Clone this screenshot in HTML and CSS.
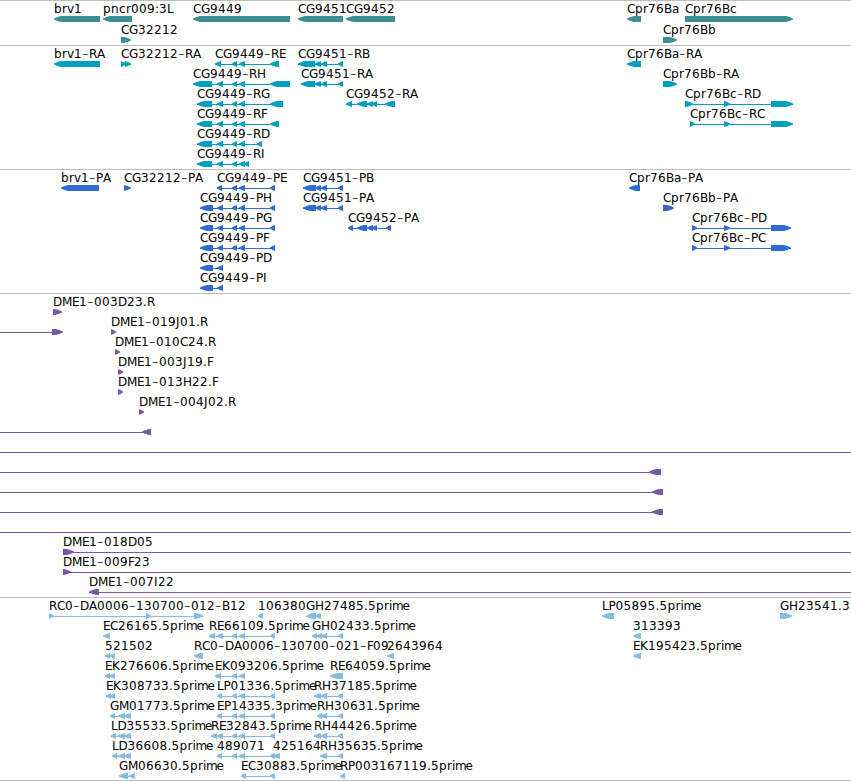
FILE: index.html
```html
<!DOCTYPE html>
<html lang="en">
<head>
  <meta charset="UTF-8">
  <title>Genome Browser</title>
  <link rel="stylesheet" href="styles.css">
</head>
<body>
  <main class="browser" id="browser"></main>
  <script src="tracks.js"></script>
</body>
</html>
```
FILE: styles.css
```css
body {
  margin: 0;
  background: #fff;
  overflow: hidden;
}

.browser {
  display: flex;
  flex-direction: column;
  width: 851px;
  border-bottom: 1px solid #bebebe;
}

/* --- Tracks --- */
.track {
  box-sizing: border-box;
  border-top: 1px solid #bebebe;
}

.track svg {
  display: block;
  width: 100%;
  height: 100%;
  overflow: visible;
}

.genes { height: 45px; color: #3d8e94; }
.transcripts { height: 124px; color: #009ebf; }
.proteins { height: 124px; color: #2f6ccf; }
.bacs { height: 304px; color: #7758a9; }
.ests { height: 183px; color: #87bcde; }

/* --- Features --- */
.exon {
  fill: currentColor;
}

.intron {
  fill: currentColor;
  shape-rendering: crispEdges;
}

.label {
  fill: #000;
  font-family: "DejaVu Sans", sans-serif;
  font-size: 12px;
}

.dash {
  font-size: 18px;
  font-weight: 200;
}
```
FILE: tracks.js
```js
// feature: [row, label, strand, exons, line start, line end]
// the label starts at the left end of the feature
const rest = [[217, 223], [232, 237], [239, 245]];
const cds = [[200, 213], ...rest, [270, 275]];
const est = [[217, 222], [232, 237], [239, 245], [270, 275]];
const end51 = [[315, 321], [321, 327], [338, 343]];

const tracks = [
  { name: 'genes', step: 21, features: [
    [0, 'brv1', -1, [[54, 100]]],
    [0, 'pncr009:3L', -1, [[103, 132]]],
    [0, 'CG9449', -1, [[193, 290]]],
    [0, 'CG9451', -1, [[298, 343]]],
    [0, 'CG9452', -1, [[346, 395]]],
    [0, 'Cpr76Ba', -1, [[627, 641]]],
    [0, 'Cpr76Bc', 1, [[685, 793]]],
    [1, 'CG32212', 1, [[121, 131]]],
    [1, 'Cpr76Bb', 1, [[663, 677]]],
  ]},
  { name: 'transcripts', step: 20, features: [
    [0, 'brv1-RA', -1, [[54, 100]]],
    [0, 'CG32212-RA', 1, [[121, 126], [125, 131]]],
    [0, 'CG9449-RE', -1, [[215, 221], [232, 237], [239, 245], [270, 279]]],
    [0, 'CG9451-RB', -1, [[298, 315], ...end51]],
    [0, 'Cpr76Ba-RA', -1, [[627, 641]]],
    [1, 'CG9449-RH', -1, [[193, 212], ...rest, [270, 290]]],
    [1, 'CG9451-RA', -1, [[301, 315], ...end51]],
    [1, 'Cpr76Bb-RA', 1, [[663, 677]]],
    [2, 'CG9449-RG', -1, [[197, 212], ...rest, [270, 283]]],
    [2, 'CG9452-RA', -1, [[346, 352], [357, 367], [367, 373], [372, 377], [385, 395]]],
    [2, 'Cpr76Bc-RD', 1, [[685, 693], [724, 730], [771, 793]]],
    [3, 'CG9449-RF', -1, [[197, 212], ...rest, [270, 279]]],
    [3, 'Cpr76Bc-RC', 1, [[690, 695], [724, 730], [771, 793]]],
    [4, 'CG9449-RD', -1, [[197, 212], ...rest, [257, 262]]],
    [5, 'CG9449-RI', -1, [[197, 212], ...rest, [244, 249]]],
  ]},
  { name: 'proteins', step: 20, features: [
    [0, 'brv1-PA', -1, [[61, 99]]],
    [0, 'CG32212-PA', 1, [[124, 131]]],
    [0, 'CG9449-PE', -1, est],
    [0, 'CG9451-PB', -1, [[303, 316], ...end51]],
    [0, 'Cpr76Ba-PA', -1, [[629, 640]]],
    [1, 'CG9449-PH', -1, cds],
    [1, 'CG9451-PA', -1, [[303, 316], ...end51]],
    [1, 'Cpr76Bb-PA', 1, [[663, 674]]],
    [2, 'CG9449-PG', -1, cds],
    [2, 'CG9452-PA', -1, [[348, 353], [357, 367], [367, 373], [372, 377], [386, 391]]],
    [2, 'Cpr76Bc-PD', 1, [[692, 697], [724, 730], [771, 791]]],
    [3, 'CG9449-PF', -1, cds],
    [3, 'Cpr76Bc-PC', 1, [[692, 697], [724, 730], [771, 791]]],
    [4, 'CG9449-PD', -1, [[200, 213], [217, 223]]],
    [5, 'CG9449-PI', -1, [[200, 213], [217, 223]]],
  ]},
  { name: 'bacs', step: 20, features: [
    [0, 'DME1-003D23.R', 1, [[53, 62]]],
    [1, '', 1, [[52, 63]], 0, 52],
    [1, 'DME1-019J01.R', 1, [[111, 116]]],
    [2, 'DME1-010C24.R', 1, [[115, 120]]],
    [3, 'DME1-003J19.F', 1, [[118, 123]]],
    [4, 'DME1-013H22.F', 1, [[118, 123]]],
    [5, 'DME1-004J02.R', 1, [[139, 144]]],
    [6, '', -1, [[142, 151]], 0, 151],
    [7, '', 1, [], 0, 851],
    [8, '', -1, [[649, 661]], 0, 661],
    [9, '', -1, [[652, 663]], 0, 663],
    [10, '', -1, [[652, 663]], 0, 663],
    [11, '', 1, [], 0, 851],
    [12, 'DME1-018D05', 1, [[63, 74]], 63, 851],
    [13, 'DME1-009F23', 1, [[63, 71]], 63, 851],
    [14, 'DME1-007I22', -1, [[89, 99]], 89, 851],
  ]},
  { name: 'ests', step: 20, features: [
    [0, 'RC0-DA0006-130700-012-B12', 1, [[49, 54], [146, 151], [194, 203]]],
    [0, '106380', -1, [[258, 263]]],
    [0, 'GH27485.5prime', -1, [[306, 316], [315, 321]]],
    [0, 'LP05895.5prime', -1, [[602, 614]]],
    [0, 'GH23541.3', 1, [[780, 792]]],
    [1, 'EC26165.5prime', -1, [[103, 110]]],
    [1, 'RE66109.5prime', -1, [[209, 215], ...rest, [270, 275]]],
    [1, 'GH02433.5prime', -1, [[312, 317], [316, 322], [321, 327], [338, 343]]],
    [1, '313393', -1, [[633, 641]]],
    [2, '521502', -1, [[105, 110], [110, 115]]],
    [2, 'RC0-DA0006-130700-021-F09', -1, [[194, 203]]],
    [2, '2643964', -1, [[387, 394]]],
    [2, 'EK195423.5prime', -1, [[633, 641]]],
    [3, 'EK276606.5prime', -1, [[105, 110], [110, 115]]],
    [3, 'EK093206.5prime', -1, [[215, 221], [232, 237], [239, 245]]],
    [3, 'RE64059.5prime', -1, [[330, 343]]],
    [4, 'EK308733.5prime', -1, [[106, 111], [110, 115]]],
    [4, 'LP01336.5prime', -1, est],
    [4, 'RH37185.5prime', -1, [[314, 321], [321, 327], [338, 343]]],
    [5, 'GM01773.5prime', -1, [[110, 115], [118, 125], [124, 131]]],
    [5, 'EP14335.3prime', -1, est],
    [5, 'RH30631.5prime', -1, [[317, 322], [321, 327], [338, 343]]],
    [6, 'LD35533.5prime', -1, [[111, 116], [118, 125], [124, 131]]],
    [6, 'RE32843.5prime', -1, [[211, 217], ...rest, [270, 275]]],
    [6, 'RH44426.5prime', -1, [[314, 321], [321, 327], [338, 343]]],
    [7, 'LD36608.5prime', -1, [[112, 117], [118, 125], [124, 131]]],
    [7, '489071', -1, est],
    [7, '425164', -1, [[273, 280]]],
    [7, 'RH35635.5prime', -1, [[320, 327], [338, 343]]],
    [8, 'GM06630.5prime', -1, [[119, 128], [129, 135]]],
    [8, 'EC30883.5prime', -1, [[241, 246], [270, 275]]],
    [8, 'RP003167119.5prime', -1, [[340, 345]]],
  ]},
];

const ctx = document.createElement('canvas').getContext('2d');
ctx.font = '12px "DejaVu Sans"';

// whole-pixel advances, a few letters set tighter
const widths = { '-': 7, E: 7, F: 6, L: 6.5, m: 10.5 };

function advance(ch) {
  return widths[ch] || Math.round(ctx.measureText(ch).width);
}

function label(text, x, y) {
  const xs = [];
  const ys = [];
  for (const ch of text) {
    xs.push(x);
    ys.push(ch === '-' ? y + 1 : y);
    x += advance(ch);
  }
  const body = text.replace(/-/g, '<tspan class="dash">-</tspan>');
  return `<text class="label" x="${xs.join(' ')}" y="${ys.join(' ')}">${body}</text>`;
}

function exon([start, end], strand, y) {
  const w = end - start;
  const head = Math.min(w, 7);
  const tip = strand < 0 ? start : end;
  const tail = strand < 0 ? end : start;
  const neck = tip - strand * head;
  const mid = tip - strand * head * 0.5;
  if (w < 8) {
    return `<path class="exon" d="M${tip} ${y + 2.5}L${mid} ${y + 1}L${tail} ${y}V${y + 6}L${mid} ${y + 5}L${tip} ${y + 3.5}Z"/>`;
  }
  return `<path class="exon" d="M${tip} ${y + 2.5}L${mid} ${y + 1}L${neck} ${y}H${tail}V${y + 6}H${neck}L${mid} ${y + 5}L${tip} ${y + 3.5}Z"/>`;
}

document.getElementById('browser').innerHTML = tracks.map(track => {
  const shapes = track.features.map(([row, text, strand, exons, from, to]) => {
    const y = 15 + row * track.step;
    const x1 = from ?? exons[0][0];
    const x2 = to ?? exons[exons.length - 1][1];
    let out = '';
    if (exons.length !== 1 || from !== undefined) {
      out += `<rect class="intron" x="${x1}" y="${y + 3}" width="${x2 - x1}" height="1"/>`;
    }
    out += exons.map(e => exon(e, strand, y)).join('');
    return text ? out + label(text, x1, y - 3) : out;
  });
  return `<section class="track ${track.name}"><svg>${shapes.join('')}</svg></section>`;
}).join('');
```
